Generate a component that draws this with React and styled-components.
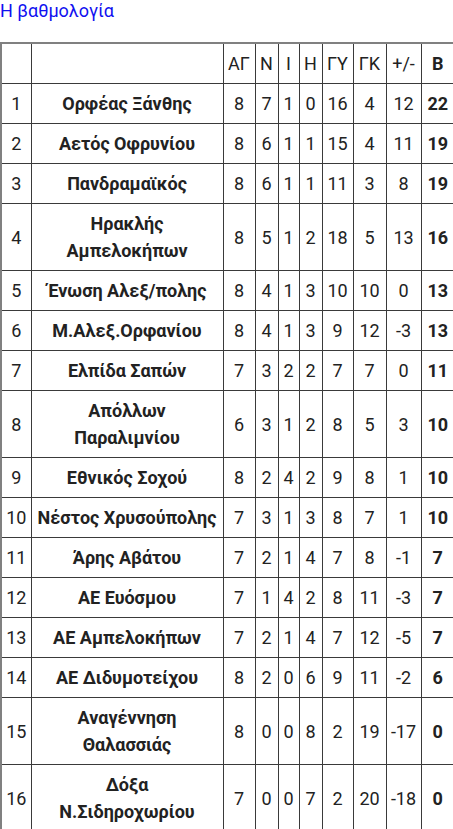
import React from "react";
import styled, { createGlobalStyle } from "styled-components";

const GlobalStyle = createGlobalStyle`
  html, body {
    margin: 0;
    padding: 0;
    background: #ffffff;
    overflow-x: hidden;
  }
  body {
    font-family: Roboto, "Liberation Sans", Arial, sans-serif;
    color: #222222;
  }
`;

const Page = styled.div`
  width: 456px;
`;

const Title = styled.a`
  display: block;
  font-size: 18px;
  line-height: 22px;
  color: #1010f0;
  text-decoration: none;
`;

const Table = styled.table`
  margin-top: 20px;
  width: 456px;
  table-layout: fixed;
  border-collapse: collapse;
  border: 2px solid #808080;
  font-size: 18px;
`;

const Cell = styled.td`
  border: 1px solid #3a3a3a;
  padding: 6px ${(p) => (p.$wide ? "5px" : "0")};
  line-height: 27px;
  text-align: center;
  vertical-align: middle;
  font-weight: ${(p) => (p.$bold ? 700 : 400)};
  white-space: ${(p) => (p.$wide ? "normal" : "nowrap")};
`;

const HeadCell = styled(Cell).attrs({ as: "th" })``;

const widths = [30, 192, 32, 23, 21, 23, 31, 33, 35, 34];

const rows = [
  [1, "Ορφέας Ξάνθης", 8, 7, 1, 0, 16, 4, 12, 22],
  [2, "Αετός Οφρυνίου", 8, 6, 1, 1, 15, 4, 11, 19],
  [3, "Πανδραμαϊκός", 8, 6, 1, 1, 11, 3, 8, 19],
  [4, "Ηρακλής Αμπελοκήπων", 8, 5, 1, 2, 18, 5, 13, 16],
  [5, "Ένωση Αλεξ/πολης", 8, 4, 1, 3, 10, 10, 0, 13],
  [6, "Μ.Αλεξ.Ορφανίου", 8, 4, 1, 3, 9, 12, -3, 13],
  [7, "Ελπίδα Σαπών", 7, 3, 2, 2, 7, 7, 0, 11],
  [8, "Απόλλων Παραλιμνίου", 6, 3, 1, 2, 8, 5, 3, 10],
  [9, "Εθνικός Σοχού", 8, 2, 4, 2, 9, 8, 1, 10],
  [10, "Νέστος Χρυσούπολης", 7, 3, 1, 3, 8, 7, 1, 10],
  [11, "Άρης Αβάτου", 7, 2, 1, 4, 7, 8, -1, 7],
  [12, "ΑΕ Ευόσμου", 7, 1, 4, 2, 8, 11, -3, 7],
  [13, "ΑΕ Αμπελοκήπων", 7, 2, 1, 4, 7, 12, -5, 7],
  [14, "ΑΕ Διδυμοτείχου", 8, 2, 0, 6, 9, 11, -2, 6],
  [15, "Αναγέννηση Θαλασσιάς", 8, 0, 0, 8, 2, 19, -17, 0],
  [16, "Δόξα Ν.Σιδηροχωρίου", 7, 0, 0, 7, 2, 20, -18, 0],
];

const heads = ["", "", "ΑΓ", "Ν", "Ι", "Η", "ΓΥ", "ΓΚ", "+/-", "Β"];

export default function App() {
  return (
    <Page>
      <GlobalStyle />
      <Title href="#">Η βαθμολογία</Title>
      <Table>
        <colgroup>
          {widths.map((w, i) => (
            <col key={i} style={{ width: w }} />
          ))}
        </colgroup>
        <thead>
          <tr>
            {heads.map((h, i) => (
              <HeadCell key={i} $bold={i === 9}>
                {h}
              </HeadCell>
            ))}
          </tr>
        </thead>
        <tbody>
          {rows.map((r) => (
            <tr key={r[0]}>
              {r.map((v, i) => (
                <Cell key={i} $bold={i === 1 || i === 9} $wide={i === 1}>
                  {v}
                </Cell>
              ))}
            </tr>
          ))}
        </tbody>
      </Table>
    </Page>
  );
}
